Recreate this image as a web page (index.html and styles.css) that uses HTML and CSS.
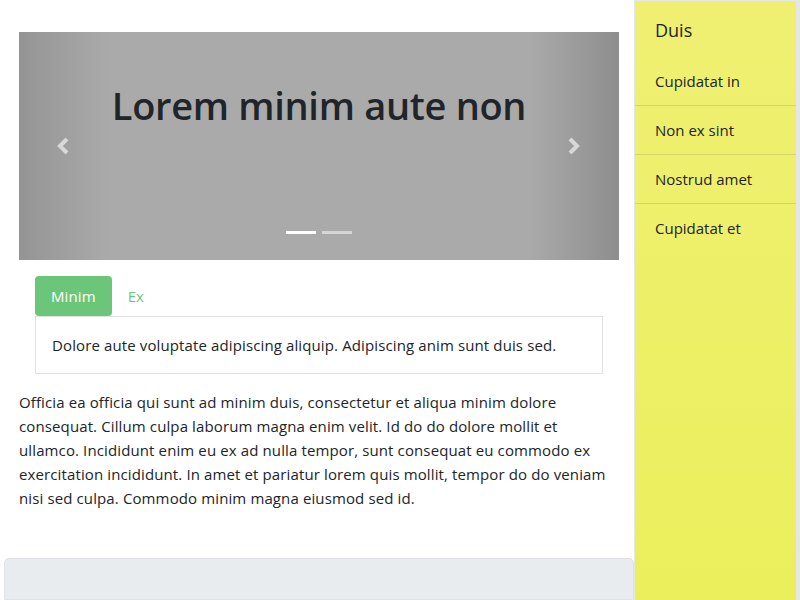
FILE: index.html
```html
<!DOCTYPE html>
<html>
<head>
<meta charset="utf-8">
<link rel="stylesheet" href="styles.css">
</head>
<body>
<div class="page">
  <main class="main">
    <div class="inner">
      <div class="carousel">
        <div class="shade shade-left"></div>
        <div class="shade shade-right"></div>
        <h1 class="carousel-title">Lorem minim aute non</h1>
        <span class="ctrl ctrl-prev">
          <svg width="16" height="20" viewBox="0 0 16 20"><polyline points="11,3 4,10 11,17" fill="none" stroke="#fff" stroke-width="4"/></svg>
        </span>
        <span class="ctrl ctrl-next">
          <svg width="16" height="20" viewBox="0 0 16 20"><polyline points="5,3 12,10 5,17" fill="none" stroke="#fff" stroke-width="4"/></svg>
        </span>
        <div class="indicators">
          <span class="ind active"></span>
          <span class="ind"></span>
        </div>
      </div>
      <div class="tabs-wrap">
        <div class="tabs">
          <span class="tab active">Minim</span>
          <span class="tab">Ex</span>
        </div>
        <div class="tab-content">Dolore aute voluptate adipiscing aliquip. Adipiscing anim sunt duis sed.</div>
      </div>
      <p class="text">Officia ea officia qui sunt ad minim duis, consectetur et aliqua minim dolore consequat. Cillum culpa laborum magna enim velit. Id do do dolore mollit et ullamco. Incididunt enim eu ex ad nulla tempor, sunt consequat eu commodo ex exercitation incididunt. In amet et pariatur lorem quis mollit, tempor do do veniam nisi sed culpa. Commodo minim magna eiusmod sed id.</p>
    </div>
    <div class="footer-box"></div>
  </main>
  <aside class="side">
    <div class="side-inner">
      <div class="side-title">Duis</div>
      <ul class="side-list">
        <li>Cupidatat in</li>
        <li>Non ex sint</li>
        <li>Nostrud amet</li>
        <li>Cupidatat et</li>
      </ul>
    </div>
  </aside>
</div>
</body>
</html>
```
FILE: styles.css
```css
html, body {
  margin: 0;
  padding: 0;
  height: 100%;
  overflow: hidden;
}
body {
  font-family: "Open Sans", "Noto Sans", sans-serif;
  color: #212529;
  background: #fff;
}
.page {
  display: flex;
  height: 600px;
}
.main {
  width: 630px;
  margin-left: 4px;
  display: flex;
  flex-direction: column;
}
.inner {
  padding: 32px 15px 0 15px;
}
.carousel {
  position: relative;
  height: 228px;
  background: #aaa;
  overflow: hidden;
}
.shade {
  position: absolute;
  top: 0;
  bottom: 0;
  width: 90px;
}
.shade-left {
  left: 0;
  background: linear-gradient(to right, rgba(0,0,0,0.13), rgba(0,0,0,0));
}
.shade-right {
  right: 0;
  background: linear-gradient(to left, rgba(0,0,0,0.17), rgba(0,0,0,0));
}
.carousel-title {
  position: relative;
  margin: 0;
  padding-top: 49px;
  text-align: center;
  font-size: 38px;
  font-weight: 600;
  line-height: 48px;
  color: #212529;
  letter-spacing: -0.3px;
}
.ctrl {
  position: absolute;
  top: 104px;
  opacity: 0.6;
  line-height: 0;
}
.ctrl-prev { left: 37px; }
.ctrl-next { left: 546px; }
.indicators {
  position: absolute;
  left: 0;
  right: 0;
  bottom: 26px;
  display: flex;
  justify-content: center;
  gap: 6px;
}
.ind {
  width: 30px;
  height: 3px;
  background: rgba(255,255,255,0.5);
}
.ind.active {
  background: #fff;
}
.tabs-wrap {
  margin: 16px 16px 0 16px;
}
.tabs {
  display: flex;
}
.tab {
  padding: 0 16px;
  height: 40px;
  line-height: 40px;
  font-size: 15px;
  letter-spacing: 0.1px;
  color: #6cc679;
  border-radius: 4px;
}
.tab.active {
  background: #6cc679;
  color: #fff;
}
.tab-content {
  border: 1px solid #dee2e6;
  padding: 16px;
  font-size: 15px;
  letter-spacing: 0.12px;
  line-height: 24px;
}
.text {
  margin: 16px 0 0 0;
  font-size: 15px;
  letter-spacing: 0.12px;
  line-height: 24px;
}
.footer-box {
  margin-top: 48px;
  flex: 1;
  background: #e9ecef;
  border: 1px solid #dee2e6;
  border-radius: 5px 5px 0 0;
}
.side {
  width: 166px;
  background: #e6e6e6;
  padding: 1px 4px 0 1px;
  box-sizing: border-box;
}
.side-inner {
  height: 100%;
  background: linear-gradient(#f0ef73, #ebef5c);
}
.side-title {
  padding: 17px 20px 0 20px;
  font-size: 18px;
  line-height: 24px;
  height: 39px;
}
.side-list {
  list-style: none;
  margin: 0;
  padding: 0;
}
.side-list li {
  padding: 0 20px;
  height: 48px;
  line-height: 48px;
  font-size: 15px;
  border-bottom: 1px solid #d6d56a;
}
.side-list li:last-child {
  border-bottom: none;
}
```
